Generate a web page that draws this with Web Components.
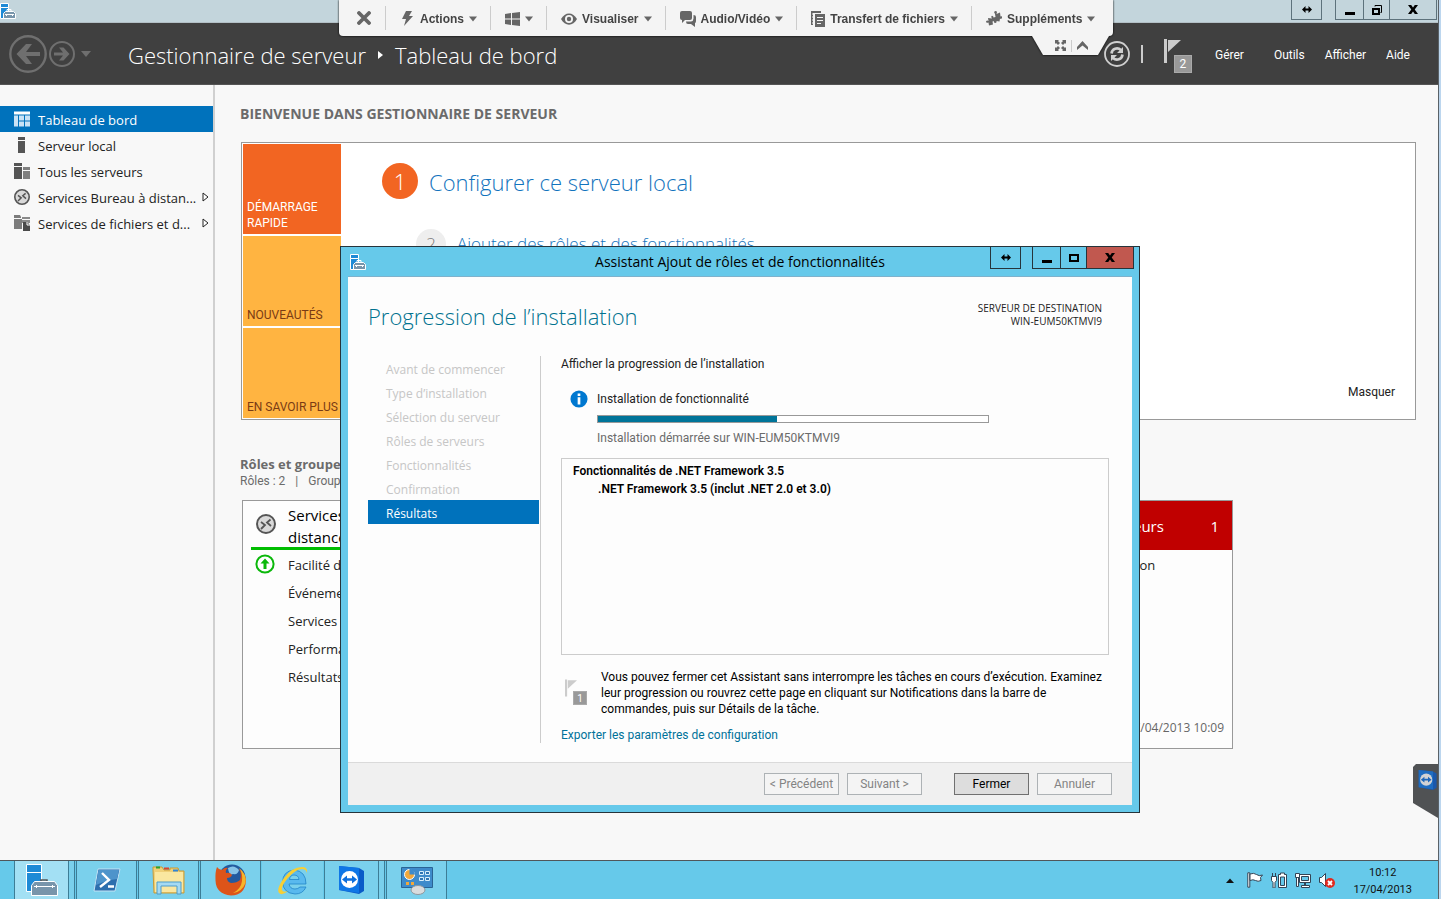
<!DOCTYPE html>
<html lang="fr">
<head>
<meta charset="utf-8">
<title>Gestionnaire de serveur</title>
<style>
html, body { margin: 0; height: 100%; }
body { --narrow: Roboto, "Open Sans", sans-serif; font: 12px/16px "Open Sans", "Noto Sans", sans-serif; color: #222; overflow: hidden; }
</style>
</head>
<body>
<server-desktop></server-desktop>

<script>
const define = (name, css, html, setup) => {
  const tpl = document.createElement('template');
  tpl.innerHTML = `<style>*{box-sizing:border-box}button{font:inherit;color:inherit;margin:0;padding:0;border:0;background:none}a{color:inherit;text-decoration:none}${css}</style>${html}`;
  customElements.define(name, class extends HTMLElement {
    constructor() {
      super();
      this.attachShadow({ mode: 'open' }).append(tpl.content.cloneNode(true));
    }
    connectedCallback() { if (setup) setup(this, this.shadowRoot); }
  });
};

/* name: [viewBox width, viewBox height, markup] */
const icons = {
  server: [16, 16, '<path d="M.5.5h8v4h-8z" fill="#1e8ad6" stroke="#fff"/><path d="M.5 4.5h8v11h-8z" fill="#1e8ad6" stroke="#fff"/><path d="M7 8.500V6.500h4v2" fill="none" stroke="#fff"/><path d="M3.500 15.500v-5l2-2h8l2 2v5z" fill="#7895ab" stroke="#fff"/><path d="M5 11.500h9M6.500 11v2M12.500 11v2" stroke="#fff" fill="none"/>'],
  back: [38, 38, '<circle cx="19" cy="19" r="17.700" fill="none" stroke="#6f6f6f" stroke-width="2.400"/><path d="M31 17v4H17l6 8h-6l-9.500-10L17 9h6l-6 8z" fill="#6f6f6f"/>'],
  forward: [26, 26, '<circle cx="13" cy="13" r="12" fill="none" stroke="#6f6f6f" stroke-width="2"/><path d="M5 11.500v3h9l-4 5h4.500l6-6.500-6-6.500H10l4 5z" fill="#6f6f6f"/>'],
  down: [10, 6, '<path d="M0 0h10L5 6z" fill="currentColor"/>'],
  crumb: [5, 8, '<path d="M0 0l5 4-5 4z" fill="#fff"/>'],
  dashboard: [16, 15, '<path d="M0 0h16v3H0z" fill="#fff"/><path d="M0 4h4v11H0zM5 4h5v5H5zM11 4h5v5h-5zM5 10h5v5H5zM11 10h5v5h-5z" fill="#c9e2f5"/>'],
  local: [16, 16, '<path d="M4 0h7v3H4zM4 4h7v12H4z" fill="#555"/>'],
  all: [16, 16, '<path d="M0 0h8v3H0zM0 4h8v12H0z" fill="#555"/><path d="M9 4h7v3H9zM9 8h7v8H9z" fill="#808080"/>'],
  rds: [20, 20, '<circle cx="10" cy="10" r="9" fill="#d9d9d9" stroke="#555" stroke-width="2"/><path d="M5 8l4 3-4 4M14.500 5.500L11 8.500l4 3.500" fill="none" stroke="#555" stroke-width="1.800"/>'],
  files: [16, 16, '<path d="M0 0h6l1 2v1H0zM0 4h8v10H0z" fill="#7c7c7c"/><path d="M8 2h8v2H8zM8 5h8v3H8z" fill="#8a8a8a"/><path d="M9 7h4l3 3v6H9z" fill="#4a4a4a"/><path d="M13 7v3h3" fill="none" stroke="#fff"/>'],
  expand: [7, 10, '<path d="M1 1l5 4-5 4z" fill="#fff" stroke="#222"/>'],
  refresh: [26, 26, '<circle cx="13" cy="13" r="12" fill="none" stroke="#d0d0d0" stroke-width="1.800"/><path d="M7.500 12.500c.5-5 6-6.500 9.500-3.500M18.500 13.500c-.5 5-6 6.500-9.500 3.500" fill="none" stroke="#d0d0d0" stroke-width="2.600"/><path d="M19 6v6h-6zM7 20v-6h6z" fill="#d0d0d0"/>'],
  flag: [17, 24, '<path d="M0 0h3v24H0zM4 1h13L4 13z" fill="currentColor"/>'],
  close: [14, 14, '<path d="M2 2l10 10M12 2L2 12" stroke="#666" stroke-width="3.800" stroke-linecap="round"/>'],
  bolt: [13, 15, '<path d="M4 0h6L7 5h4L2 15l2-7H0z" fill="#666"/>'],
  windows: [15, 14, '<path d="M0 2l6-1v5.500H0zM7 .900L15 0v6.500H7zM0 7.500h6V13l-6-1zM7 7.500h8V14l-8-1z" fill="#666"/>'],
  eye: [16, 12, '<path d="M0 6C4-1.500 12-1.500 16 6 12 13.500 4 13.500 0 6z" fill="#666"/><circle cx="8" cy="6" r="4" fill="#f4f4f4"/><circle cx="8" cy="6" r="2.200" fill="#666"/>'],
  chat: [16, 16, '<path d="M2 0h8q2 0 2 2v5q0 2-2 2H5l-3 3V9Q0 9 0 7V2Q0 0 2 0z" fill="#666"/><path d="M13.500 4Q16 4 16 6v4q0 2-1 2v4l-4-3H8q-2 0-2-2.500h5q2.500-.5 2.500-3z" fill="#666"/>'],
  copy: [14, 16, '<path d="M0 0h10v2H2v12H0zM4 3h10v13H4z" fill="#666"/><path d="M1 3h1M1 6h1M1 9h1M1 12h1" stroke="#f4f4f4"/><path d="M6 6.500h6M6 9.500h6M6 12.500h4" stroke="#f4f4f4"/>'],
  puzzle: [16, 15, '<path d="M8 1q2-2 3 0l-.5 2L14 1.500l.5 4q2-1 1.500 1.500-1 1.500-2 .5l-.5 3-3-.5q.5 2-1.500 2-1.500-.5-1-2l-1.500.5.500 3-4 1-.5-3Q0 12.500 0 10.500 1 9 2.500 10L2 7l4 .500Q4.500 5.500 6 4.700q1.500 0 1.500 1.800L9.500 6 9 3z" fill="#666"/>'],
  full: [11, 11, '<path d="M0 0h4L3 1l2 2-2 2-2-2-1 1zM11 0v4l-1-1-2 2-2-2 2-2-1-1zM0 11V7l1 1 2-2 2 2-2 2 1 1zM11 11H7l1-1-2-2 2-2 2 2 1-1z" fill="#666"/>'],
  up: [11, 9, '<path d="M0 6l5.500-6L11 6v3L5.500 4.500 0 9z" fill="#666"/>'],
  stretch: [10, 7, '<path d="M0 3.500L3.500 0v2.500h3V0L10 3.500 6.500 7V4.500h-3V7z" fill="#000"/>'],
  min: [10, 10, '<path d="M0 7h10v3H0z" fill="#000"/>'],
  max: [10, 8, '<path d="M1 1h8v6H1z" fill="none" stroke="#000" stroke-width="2"/>'],
  restore: [10, 10, '<path d="M1 4h6v5H1z" fill="none" stroke="#000" stroke-width="2"/><path d="M3 1.500V.5h6.500v7h-1" fill="none" stroke="#000"/>'],
  x: [10, 9, '<path d="M0 0h3.200L5 2.600 6.800 0H10L6.700 4.500 10 9H6.800L5 6.400 3.200 9H0l3.300-4.500z" fill="#000"/>'],
  info: [20, 20, '<circle cx="10" cy="10" r="9.500" fill="#0078d0"/><path d="M8.500 4h3v2.600h-3zM8.500 8h3v8h-3z" fill="#fff"/>'],
  ok: [20, 20, '<circle cx="10" cy="10" r="8.600" fill="#fff" stroke="#0bb80b" stroke-width="2"/><path d="M10 4.500l4.500 5h-3V15h-3V9.500h-3z" fill="#0bb80b"/>'],
  tv: [28, 30, '<path d="M1 1l20 2 5 3v20l-5 3-20-4z" fill="#0a5bc8"/><path d="M1 1l20 2v25L1 25z" fill="#0f76e6"/><circle cx="11.500" cy="14.500" r="8.500" fill="#fff"/><path d="M4 14.500l5-4v2.700h5v-2.700l5 4-5 4v-2.700H9v2.700z" fill="#0f6fdc"/>'],
  bigserver: [32, 32, '<path d="M.5.5h15v8H.5zM.5 8.500h15v19H.5z" fill="#1e8ad6" stroke="#fff"/><path d="M15 17.500V16h6v1.500" fill="none" stroke="#555" stroke-width="1.500"/><path d="M5.500 31.500v-10l3-4h20l3 4v10z" fill="#7895ab" stroke="#fff"/><path d="M8 22.500h21M10.500 21v3M26.500 21v3" stroke="#fff"/>'],
  powershell: [28, 24, '<path d="M5 1h22l-5 22H1z" fill="#2d6fae" stroke="#c4e2f4" stroke-linejoin="round"/><path d="M5.500 2h20.500l-2 9Q14 12 3 17z" fill="#4e94cb"/><path d="M9 5l7 7-9 7M15 18.500h6" fill="none" stroke="#fff" stroke-width="2.400"/>'],
  folder: [34, 30, '<path d="M1 5V2h9l2 3h6V3h8l1 3h5v22H2z" fill="#f0d078" stroke="#c79b37"/><path d="M3 7h28v20H3z" fill="#fae7a0"/><path d="M4 1.500h4v2H4z" fill="#2ba12b"/><path d="M12 2.500h5v2h-5z" fill="#d9442c"/><path d="M21 4.500h5v2h-5z" fill="#3186d6"/><path d="M5 29V17h24v12h-4v-8H9v8z" fill="#a5daf3" stroke="#4d9ccb"/>'],
  firefox: [32, 32, '<circle cx="17" cy="14" r="13.500" fill="#235a9f"/><path d="M13 4q6-4 11 2-1 5-6 4-4 2-5-6z" fill="#86c3e8"/><path d="M2 3q2 3 5 3 3-3 6-2-3 2-2 5 4-1 6 2-1 3-5 3 0 4 4 5 6 0 9-3 2-6-1-11 7 4 7 12Q30 31 16 31.500 1 30 .5 16.500 0 8 2 3z" fill="#dd5419"/><path d="M24 4q8 6 6.500 15Q27 28 18 29q8-4 9-12 1-8-3-13z" fill="#f5b62a"/>'],
  ie: [32, 32, '<path d="M29 20H12q1 5 6 5 3 0 5-2h6q-3 7-11 7Q6 29 5.500 18 6 7 17 6q12 1 12 14zM12.500 15.500H22q-.5-4.500-5-4.500-4 0-4.500 4.500z" fill="#59b9ee" stroke="#2285c8" stroke-width=".8"/><path d="M30 9q1-6-5-6Q15 3 7 14-1 25 2 29q3 3 9-2-5 2-6-1-1-4 6-12Q19 5 25 5q4 0 5 4z" fill="#f7cf35"/>'],
  control: [32, 30, '<path d="M.5 2.500h31v20H.5z" fill="#3e8bcb" stroke="#2a6495"/><circle cx="8.500" cy="9.500" r="5" fill="#f2a83a" stroke="#fff"/><path d="M8.500 9.500v-6a6 6 0 0 1 5.500 6z" fill="#3e8bcb"/><path d="M18.500 6.500h4v3h-4zM24.500 6.500h4v3h-4zM18.500 12.500h4v3h-4zM24.500 12.500h4v3h-4z" fill="#2f75b3" stroke="#d6eefb"/><path d="M5 17h3v3H5zM10 17h3v3h-3z" fill="#f2a83a"/><ellipse cx="17" cy="25" rx="7" ry="4.500" fill="#d9dcde" stroke="#8f979d"/>'],
  trayup: [8, 5, '<path d="M0 5l4-4.500L8 5z" fill="#111"/>'],
  trayflag: [16, 16, '<path d="M.8.8h2v14.400h-2z" fill="#fff" stroke="#345"/><path d="M3 2q4-1.500 6.500.5t6 .5l-2 2.500.5 3q-3 1.500-5.500 0T3 8.500z" fill="#fff" stroke="#345"/>'],
  power: [16, 16, '<path d="M7.500 2.500h2V1h4v1.500h2v13h-8z" fill="#fff" stroke="#345"/><path d="M9.500 5h4v8.500h-4z" fill="#66c9ea" stroke="#345"/><path d="M.5 4.500h5v4l-1.500 2V16H2v-5.500L.5 8.500zM1.500 4V1M4.500 4V1" fill="#fff" stroke="#345"/>'],
  net: [16, 16, '<path d="M4.500 2.500h11v8h-11z" fill="#fff" stroke="#345"/><path d="M6.500 4.500h7v4h-7z" fill="#66c9ea" stroke="#345"/><path d="M10 11v2" stroke="#345" stroke-width="2"/><path d="M6.500 13.500h8v2h-8z" fill="#fff" stroke="#345"/><path d="M.5 1.500h4v4h-4zM1.500 5.500h2v9h-2z" fill="#fff" stroke="#345"/>'],
  mute: [16, 16, '<path d="M.5 5.500h2l4-4v13l-4-4h-2z" fill="#fff" stroke="#345"/><circle cx="11" cy="11" r="5" fill="#e02a20"/><path d="M9 9l4 4M13 9l-4 4" stroke="#fff" stroke-width="1.800"/>']
};
define('ui-icon', ':host{display:block;flex:none}svg{display:block}', '', (el, root) => {
  const [w, h, body] = icons[el.getAttribute('name')];
  const width = el.getAttribute('width') || w, height = el.getAttribute('height') || h;
  root.innerHTML += `<svg width="${width}" height="${height}" viewBox="0 0 ${w} ${h}" aria-hidden="true">${body}</svg>`;
});

define('window-controls', `
  :host{display:flex;--line:#5d727c;--h:20px;--close:transparent}
  button{height:var(--h);border:1px solid var(--line);border-top:0;display:grid;place-items:center}
  button+button{border-left:0}
  #s{width:31px;margin-right:var(--split,13px)}
  #m{width:29px;border-left:1px solid var(--line)}
  #r{width:26px} #c{width:47px;background:var(--close)}`,
  `<button id="s" aria-label="Étirer"><ui-icon name="stretch"></ui-icon></button>
   <button id="m" aria-label="Réduire"><ui-icon name="min"></ui-icon></button>
   <button id="r" aria-label="Agrandir"></button>
   <button id="c" aria-label="Fermer"><ui-icon name="x"></ui-icon></button>`,
  (el, root) => {
    root.getElementById('r').innerHTML = `<ui-icon name="${el.hasAttribute('maximized') ? 'restore' : 'max'}"></ui-icon>`;
  });

customElements.define('notify-flag', class extends HTMLElement {
  constructor() {
    super();
    const size = this.hasAttribute('small') ? 'width="12" height="18"' : '';
    this.attachShadow({ mode: 'open' }).innerHTML = `
    <style>
      :host{display:block;position:relative;width:28px;height:34px;color:#ccc}
      span{box-sizing:border-box;position:absolute;right:0;bottom:0;width:18px;height:18px;background:#999;border:1px solid #aaa;color:#fff;font-size:12px;line-height:17px;text-align:center}
      :host([small]){width:22px;height:26px}
      :host([small]) span{width:14px;height:14px;font-size:10px;line-height:13px}
    </style>
    <ui-icon name="flag" ${size}></ui-icon><span><slot></slot></span>`;
  }
});

customElements.define('tool-item', class extends HTMLElement {
  constructor() {
    super();
    const icon = this.getAttribute('icon');
    this.attachShadow({ mode: 'open' }).innerHTML = `
    <style>
      :host{display:flex;align-items:center;height:24px;border-left:1px solid #ccc}
      :host(:first-child){border-left:0}
      button{display:flex;align-items:center;font:bold 12px/16px "Liberation Sans",Arial,sans-serif;color:#444;border:0;background:none;margin:0;padding:1px 13px 0 14px;white-space:nowrap}
      :host(:first-child) button{padding:0 9px 0 14px}
      .arrow{color:#666;margin-left:5px} .lead{margin-right:5px}
      .lead[name=bolt]{margin-left:2px}
      :host([compact]) .lead{margin-right:0}
      :host(:not([menu])) .arrow{display:none}
    </style>
    <button aria-label="${this.getAttribute('label') || this.textContent}"><ui-icon class="lead" name="${icon}"></ui-icon><slot></slot><ui-icon class="arrow" name="down" width="8" height="6"></ui-icon></button>`;
  }
});

define('remote-toolbar', `
  :host{display:block;filter:drop-shadow(0 0 1px #000)}
  nav{display:flex;align-items:center;height:36px;padding-left:4px;background:#f4f4f4;border-radius:0 0 4px 4px}
  .tab{display:flex;align-items:center;justify-content:center;gap:5px;width:77px;height:19px;margin-left:auto;margin-right:4px;padding-left:2px;background:#f4f4f4;clip-path:polygon(0 0,100% 0,66px 100%,11px 100%)}
  .tab i{width:1px;height:12px;background:#ccc}`,
  `<nav aria-label="Contrôle à distance">
    <tool-item icon="close" label="Fermer"></tool-item>
    <tool-item icon="bolt" menu>Actions</tool-item>
    <tool-item icon="windows" label="Windows" menu compact></tool-item>
    <tool-item icon="eye" menu>Visualiser</tool-item>
    <tool-item icon="chat" menu>Audio/Vidéo</tool-item>
    <tool-item icon="copy" menu>Transfert de fichiers</tool-item>
    <tool-item icon="puzzle" menu>Suppléments</tool-item>
  </nav>
  <div class="tab"><button aria-label="Plein écran"><ui-icon name="full"></ui-icon></button><i></i><button aria-label="Replier"><ui-icon name="up"></ui-icon></button></div>`);

define('server-header', `
  :host{display:block;flex:none}
  .strip{display:flex;justify-content:space-between;height:23px;background:#c3d5dc;border-bottom:1px solid #b3c0c6;padding-right:1px}
  .strip>ui-icon{margin-top:3px}
  .bar{display:flex;align-items:center;height:62px;background:#404040;color:#fff;padding:0 28px 0 9px;border-bottom:1px solid #555}
  .bar>button{margin-right:2px}
  #drop{color:#6f6f6f;margin:0 0 0 4px}
  h1{display:flex;align-items:center;gap:12px;margin:0 auto 0 37px;padding-top:2px;font-size:22px;line-height:32px;font-weight:300}
  .actions{display:flex;align-items:center;font:12px/16px var(--narrow)}
  .actions i{width:2px;height:18px;background:#ccc;margin:0 21px 0 11px}
  notify-flag{margin-top:5px}
  .menu{display:flex;gap:20px;margin-left:23px;padding-top:2px}
  .menu a:first-child{margin-right:10px}`,
  `<div class="strip"><ui-icon name="server"></ui-icon><window-controls maximized></window-controls></div>
  <div class="bar">
    <button aria-label="Précédent"><ui-icon name="back"></ui-icon></button>
    <button aria-label="Suivant"><ui-icon name="forward"></ui-icon></button>
    <button id="drop" aria-label="Historique"><ui-icon name="down"></ui-icon></button>
    <h1><span>Gestionnaire de serveur</span><ui-icon name="crumb"></ui-icon><span>Tableau de bord</span></h1>
    <div class="actions">
      <button aria-label="Actualiser"><ui-icon name="refresh"></ui-icon></button><i></i>
      <notify-flag>2</notify-flag>
      <nav class="menu"><a href="#">Gérer</a><a href="#">Outils</a><a href="#">Afficher</a><a href="#">Aide</a></nav>
    </div>
  </div>`);

customElements.define('nav-item', class extends HTMLElement {
  constructor() {
    super();
    this.attachShadow({ mode: 'open' }).innerHTML = `
    <style>
      :host{display:block;font-size:13px;line-height:26px;color:#222}
      :host([current]){background:#0072bc;color:#fff}
      a{display:flex;align-items:center;color:inherit;text-decoration:none;height:26px;padding:0 4px 0 14px}
      span{margin:2px auto 0 8px;white-space:nowrap}
    </style>
    <a href="#"><ui-icon name="${this.getAttribute('icon')}" width="16" height="16"></ui-icon><span><slot></slot></span>${this.hasAttribute('more') ? '<ui-icon name="expand"></ui-icon>' : ''}</a>`;
  }
});

define('side-nav', ':host{display:block;width:215px;flex:none;border-right:2px solid #d0d0d0;padding-top:21px}',
  `<nav>
    <nav-item icon="dashboard" current>Tableau de bord</nav-item>
    <nav-item icon="local">Serveur local</nav-item>
    <nav-item icon="all">Tous les serveurs</nav-item>
    <nav-item icon="rds" more>Services Bureau à distan...</nav-item>
    <nav-item icon="files" more>Services de fichiers et d...</nav-item>
  </nav>`);

define('welcome-panel', `
  :host{display:flex;position:relative;height:278px;border:1px solid #999;background:#fff;padding:1px}
  .tabs{display:grid;grid-template:repeat(3,90px)/98px;gap:2px;width:98px;flex:none}
  .tabs a{display:flex;align-items:flex-end;padding:0 0 3px 4px;background:#ffb441;color:#7a3b14;font:12px/16px var(--narrow);white-space:nowrap}
  .tabs a:first-child{background:#f26522;color:#fff;white-space:normal}
  ol{list-style:none;margin:0;padding:19px 0 0 41px;flex:1;font-weight:300;color:#1273bd}
  li{display:flex;align-items:center}
  b{display:grid;place-items:center;border-radius:50%;font-weight:300}
  li:first-child{font-size:22px;line-height:34px;gap:11px}
  li:first-child a{padding-top:2px}
  li:first-child b{width:36px;height:36px;background:#f26522;color:#fff}
  li+li{font-size:17px;line-height:30px;margin:30px 0 0 34px;gap:11px}
  li+li b{width:30px;height:30px;background:#eee;color:#777}
  .hide{align-self:flex-end;padding:0 19px 18px 0;font:12px/16px var(--narrow);color:#222}`,
  `<nav class="tabs"><a href="#">DÉMARRAGE RAPIDE</a><a href="#">NOUVEAUTÉS</a><a href="#">EN SAVOIR PLUS</a></nav>
  <ol><li><b>1</b><a href="#">Configurer ce serveur local</a></li><li><b>2</b><a href="#">Ajouter des rôles et des fonctionnalités</a></li></ol>
  <a class="hide" href="#">Masquer</a>`);

define('role-tile', `
  :host{display:flex;flex-direction:column;height:249px;border:1px solid #999;background:#fdfdfd;font-size:13px;position:relative}
  header{display:flex;align-items:center;height:49px;margin:0 8px;border-bottom:3px solid #00bd00;font-size:15px;line-height:22px;color:#000;gap:12px;padding-left:5px}
  h3{font:inherit;margin:4px 0 0;flex:1}
  :host([alert]) header{margin:0 0 3px;padding:0 13px 0 44px;height:49px;border:0;background:#c00000;color:#fff}
  :host([alert]) h3{margin:0}
  ::slotted(ul){list-style:none;margin:0;padding:1px 0 0 45px;line-height:28px;color:#222}
  :host([alert]) ::slotted(ul){padding:0 0 0 48px;margin-top:-2px}
  .ok{position:absolute;left:12px;top:53px}
  :host([alert]) .ok{display:none}
  footer{margin:auto 8px 12px;text-align:right;color:#666;font-size:12px;line-height:16px}`,
  `<header><slot name="icon"></slot><h3><slot name="title"></slot></h3><slot name="count"></slot></header>
  <ui-icon class="ok" name="ok"></ui-icon><slot></slot><footer><slot name="date"></slot></footer>`);

define('dashboard-view', `
  :host{display:block;flex:1;min-width:0;padding:18px 22px 0 25px}
  h2{font-size:14px;line-height:22px;color:#6b6b6b;margin:0}
  welcome-panel{margin:17px 0 0 1px}
  h2.groups{margin-top:36px;font-size:13px;line-height:16px}
  p{display:flex;gap:10px;margin:0;font:12px/18px var(--narrow);color:#6b6b6b}
  .tiles{display:grid;grid-template-columns:repeat(4,235px);gap:17px;margin:10px 0 0 2px}
  role-tile[alert]{grid-column:4}`,
  `<h2>BIENVENUE DANS GESTIONNAIRE DE SERVEUR</h2>
  <welcome-panel></welcome-panel>
  <h2 class="groups">Rôles et groupes</h2>
  <p><span>Rôles : 2</span><span>|</span><span>Groupes</span></p>
  <div class="tiles">
    <role-tile><ui-icon slot="icon" name="rds"></ui-icon><span slot="title">Services<br>distance</span>
      <ul><li>Facilité de</li><li>Événements</li><li>Services</li><li>Performances</li><li>Résultats</li></ul></role-tile>
    <role-tile alert><span slot="title">Tous les serveurs</span><span slot="count">1</span>
      <ul><li>Facilité de gestion</li></ul><span slot="date">17/04/2013 10:09</span></role-tile>
  </div>`);

define('install-wizard', `
  :host{display:flex;flex-direction:column;width:800px;border:1px solid #26343b;background:#66c9ea;padding:0 7px 7px;color:#222;font-size:12px;line-height:16px}
  .title{display:grid;grid-template-columns:144px 1fr 144px;height:29px;flex:none;align-items:center}
  .title ui-icon{margin-left:2px}
  .title h2{margin:0;text-align:center;font-size:14px;line-height:20px;font-weight:400;color:#000}
  window-controls{--line:#26343b;--h:22px;--close:#c1584f;--split:11px;align-self:start;justify-self:end;margin-right:-2px}
  .page{flex:1;display:flex;flex-direction:column;background:#fdfdfd;border-top:1px solid #7fb2cc}
  .top{display:flex;justify-content:space-between;padding:23px 30px 0 20px;height:79px}
  h1{margin:0;font-size:22px;line-height:32px;font-weight:300;color:#00728f}
  .top p{margin:0;padding-top:2px;text-align:right;font:10px/13px "Open Sans",sans-serif;color:#222}
  .body{display:flex;flex:1;padding:0 23px 19px 20px}
  ol{list-style:none;margin:0;padding:0 1px 0 0;width:173px;flex:none;border-right:1px solid #ccc}
  li{padding-left:18px;height:24px;line-height:27px;color:#c6c6c6}
  li[aria-current]{background:#0072bc;color:#fff}
  .main{flex:1;display:flex;flex-direction:column;padding-left:20px;font-family:var(--narrow)}
  p{margin:0}
  .job{display:grid;grid-template-columns:18px 392px;column-gap:9px;padding:17px 0 0 9px;row-gap:0;align-items:center}
  .job ui-icon{margin:1px 0 0}
  .bar{grid-column:2;appearance:none;display:block;width:100%;height:8px;margin:7px 0 7px;border:1px solid #999;background:#fff}
  .bar::-webkit-progress-bar{background:#fff}
  .bar::-webkit-progress-value{background:#007499}
  .job p{grid-column:2;color:#6b6b6b}
  .job p.now{color:#222}
  .list{height:197px;margin-top:12px;border:1px solid #ccc;padding:3px 11px;font-weight:600;line-height:18px;color:#000}
  .list p+p{padding-left:25px}
  .note{display:flex;gap:14px;padding:14px 0 0 4px;color:#000;white-space:nowrap}
  notify-flag{margin-top:10px;flex:none}
  .link{color:#00729a;margin-top:10px}
  footer{display:flex;gap:8px;justify-content:flex-end;padding:10px 20px 10px;height:43px;flex:none;background:#f0f0f0;border-top:1px solid #dadada;font-family:var(--narrow)}
  footer button{width:75px;height:22px;border:1px solid #adb2b5;background:#f4f4f4;color:#838383;white-space:nowrap;line-height:20px}
  footer .go{margin-left:24px;background:#ddd;border-color:#707070;color:#000}`,
  `<div class="title"><ui-icon name="server"></ui-icon><h2>Assistant Ajout de rôles et de fonctionnalités</h2><window-controls></window-controls></div>
  <div class="page">
    <div class="top"><h1>Progression de l’installation</h1><p>SERVEUR DE DESTINATION<br>WIN-EUM50KTMVI9</p></div>
    <div class="body">
      <ol><li>Avant de commencer</li><li>Type d’installation</li><li>Sélection du serveur</li><li>Rôles de serveurs</li><li>Fonctionnalités</li><li>Confirmation</li><li aria-current="step">Résultats</li></ol>
      <div class="main">
        <p>Afficher la progression de l’installation</p>
        <div class="job"><ui-icon name="info" width="18" height="18"></ui-icon><p class="now" id="job">Installation de fonctionnalité</p>
          <progress class="bar" value="46" max="100" aria-labelledby="job"></progress><p>Installation démarrée sur WIN-EUM50KTMVI9</p></div>
        <div class="list"><p>Fonctionnalités de .NET Framework 3.5</p><p>.NET Framework 3.5 (inclut .NET 2.0 et 3.0)</p></div>
        <div class="note"><notify-flag small>1</notify-flag><p>Vous pouvez fermer cet Assistant sans interrompre les tâches en cours d’exécution. Examinez<br>leur progression ou rouvrez cette page en cliquant sur Notifications dans la barre de<br>commandes, puis sur Détails de la tâche.</p></div>
        <a class="link" href="#">Exporter les paramètres de configuration</a>
      </div>
    </div>
    <footer><button disabled>&lt; Précédent</button><button disabled>Suivant &gt;</button><button class="go">Fermer</button><button disabled>Annuler</button></footer>
  </div>`);

customElements.define('task-button', class extends HTMLElement {
  constructor() {
    super();
    this.attachShadow({ mode: 'open' }).innerHTML = `
    <style>
      :host{display:flex;width:62px;height:38px;padding-right:1px}
      button{flex:1;display:grid;place-items:center;margin:0;padding:0;border:1px solid #3d7d96;border-width:0 1px;background:#7ad0ec}
      :host([active]) button{background:#a3e0f4}
      :host([plain]) button{border-color:transparent}
      .stack{display:none;width:5px;border-right:1px solid #3d7d96;background:#7ad0ec}
      :host([stacked]) .stack{display:block}
    </style>
    <button aria-label="${this.getAttribute('label')}"><ui-icon name="${this.getAttribute('icon')}"></ui-icon></button><div class="stack"></div>`;
  }
});

define('task-bar', `
  :host{display:flex;justify-content:space-between;flex:none;height:39px;border-top:1px solid #50565a;background:#66c9ea;padding-left:14px;color:#111}
  .apps{display:flex}
  .tray{display:flex;align-items:center;gap:8px;padding-right:26px}
  .tray ui-icon:first-child{margin-right:5px}
  time{text-align:center;font:11px/17px var(--narrow);margin-left:10px;padding-top:1px}`,
  `<div class="apps">
    <task-button icon="bigserver" label="Gestionnaire de serveur" active stacked></task-button>
    <task-button icon="powershell" label="PowerShell"></task-button>
    <task-button icon="folder" label="Explorateur"></task-button>
    <task-button icon="firefox" label="Firefox"></task-button>
    <task-button icon="ie" label="Internet Explorer" plain></task-button>
    <task-button icon="tv" label="TeamViewer" stacked></task-button>
    <task-button icon="control" label="Panneau de configuration"></task-button>
  </div>
  <div class="tray"><ui-icon name="trayup"></ui-icon><ui-icon name="trayflag"></ui-icon><ui-icon name="power"></ui-icon><ui-icon name="net"></ui-icon><ui-icon name="mute"></ui-icon><time datetime="2013-04-17T10:12">10:12<br>17/04/2013</time></div>`);

define('server-desktop', `
  :host{display:block;height:100vh;min-height:840px;padding-right:2px;background:#bcd6ee}
  .screen{position:relative;display:flex;flex-direction:column;height:100%;border-right:1px solid #5a6268;background:#f8f8f8}
  .work{display:flex;flex:1;min-height:0}
  remote-toolbar{position:absolute;left:339px;top:0;width:774px}
  install-wizard{position:absolute;left:340px;top:246px}
  .dock{position:absolute;right:0;bottom:81px;width:25px;height:54px;display:grid;align-content:start;justify-content:start;padding:5px;background:#505254;clip-path:polygon(3px 0,100% 0,100% 100%,0 39px,0 3px)}
  .dock ui-icon{opacity:.75}`,
  `<div class="screen">
    <server-header></server-header>
    <div class="work"><side-nav></side-nav><dashboard-view></dashboard-view></div>
    <task-bar></task-bar>
    <install-wizard role="dialog"></install-wizard>
    <remote-toolbar></remote-toolbar>
    <button class="dock" aria-label="TeamViewer"><ui-icon name="tv" width="20" height="22"></ui-icon></button>
  </div>`);
</script>
</body>
</html>
